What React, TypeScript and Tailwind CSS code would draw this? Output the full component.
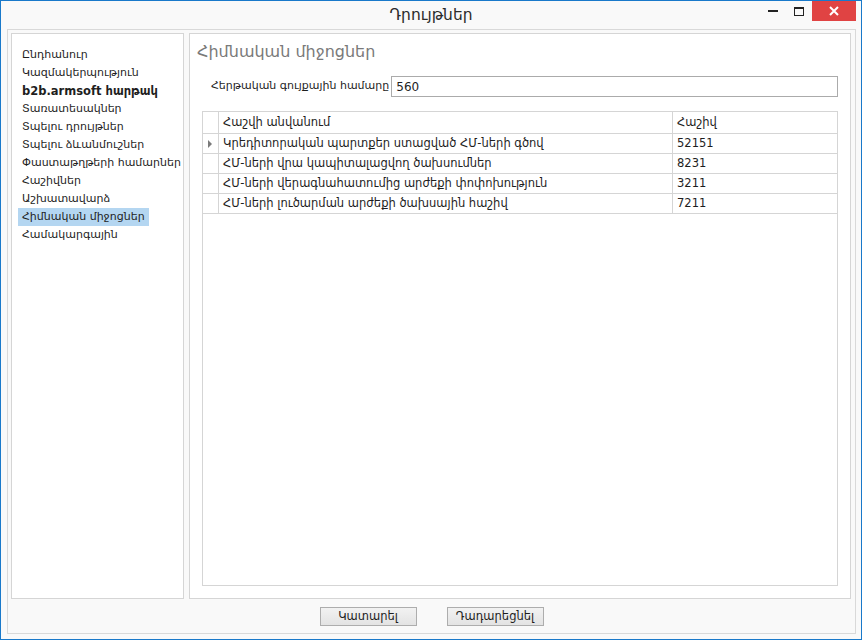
const menuItems = [
  { label: "Ընդհանուր" },
  { label: "Կազմակերպություն" },
  { label: "b2b.armsoft հարթակ", bold: true },
  { label: "Տառատեսակներ" },
  { label: "Տպելու դրույթներ" },
  { label: "Տպելու ձևանմուշներ" },
  { label: "Փաստաթղթերի համարներ" },
  { label: "Հաշիվներ" },
  { label: "Աշխատավարձ" },
  { label: "Հիմնական միջոցներ", active: true },
  { label: "Համակարգային" },
]

const rows = [
  { name: "Կրեդիտորական պարտքեր ստացված ՀՄ-ների գծով", account: "52151", current: true },
  { name: "ՀՄ-ների վրա կապիտալացվող ծախսումներ", account: "8231" },
  { name: "ՀՄ-ների վերագնահատումից արժեքի փոփոխություն", account: "3211" },
  { name: "ՀՄ-ների լուծարման արժեքի ծախսային հաշիվ", account: "7211" },
]

const font = "font-['DejaVu_Sans',sans-serif]"

export default function App() {
  return (
    <div className={`w-[862px] h-[640px] flex flex-col bg-[#f9f9f9] border border-[#1979ca] text-[#1e1e1e] ${font}`}>
      {/* title bar */}
      <div className="h-[28px] flex items-start shrink-0 relative">
        <div className="flex-1 h-full flex items-center justify-center text-[15.5px] text-[#2b2b2b] pt-[1px]">
          Դրույթներ
        </div>
        <div className="absolute right-[5px] top-0 flex items-start">
          <div className="w-[26px] h-[20px] flex items-center justify-center">
            <div className="w-[10px] h-[2px] bg-[#222]" />
          </div>
          <div className="w-[26px] h-[20px] flex items-center justify-center">
            <div className="w-[10px] h-[9px] border border-[#222] border-t-[2px]" />
          </div>
          <div className="w-[44px] h-[20px] bg-[#e04343] flex items-center justify-center text-white">
            <svg width="10" height="10" viewBox="0 0 10 10">
              <path d="M1 1 L9 9 M9 1 L1 9" stroke="white" strokeWidth="2" />
            </svg>
          </div>
        </div>
      </div>

      {/* outer frame */}
      <div className="ml-[6px] mr-[5px] h-[605px] border border-[#d9d9d9] flex flex-col">
        <div className="flex gap-[5px] pl-[3px] pr-[4px] pt-[3px]">
          {/* left menu */}
          <div className="w-[173px] h-[566px] bg-white border border-[#d5d5d5] pt-[12px] pl-[6px] flex flex-col items-start text-[11px] leading-[18px]">
            {menuItems.map((m) => (
              <div
                key={m.label}
                className={`px-[4px] h-[18px] whitespace-nowrap ${m.active ? "bg-[#b4d6f1]" : ""} ${m.bold ? "font-bold text-[11.5px]" : ""}`}
              >
                {m.label}
              </div>
            ))}
          </div>

          {/* right content */}
          <div className="w-[662px] h-[566px] bg-white border border-[#d5d5d5] flex flex-col px-[12px]">
            <div className="text-[16px] text-[#7a7a7a] -ml-[5px] mt-[6px] leading-[24px]">Հիմնական միջոցներ</div>
            <div className="flex items-center mt-[12px] pl-[9px]">
              <span className="text-[11px] mr-[2px] whitespace-nowrap">Հերթական գույքային համարը</span>
              <div className="flex-1 h-[21px] border border-[#ababab] flex items-center px-[4px] text-[12px]">560</div>
            </div>

            {/* grid */}
            <div className="mt-[14px] h-[475px] border border-[#d5d5d5] flex flex-col text-[11.5px]">
              <div className="flex h-[22px] border-b border-[#d5d5d5]">
                <div className="w-[16px] border-r border-[#d5d5d5]" />
                <div className="w-[454px] border-r border-[#d5d5d5] pl-[4px] flex items-center">Հաշվի անվանում</div>
                <div className="flex-1 pl-[4px] flex items-center">Հաշիվ</div>
              </div>
              {rows.map((r) => (
                <div key={r.account} className="flex h-[20px] border-b border-[#d5d5d5]">
                  <div className="w-[16px] border-r border-[#d5d5d5] flex items-center justify-center">
                    {r.current && (
                      <svg width="5" height="8" viewBox="0 0 5 8">
                        <path d="M0 0 L4 4 L0 8 Z" fill="#7a7a7a" />
                      </svg>
                    )}
                  </div>
                  <div className="w-[454px] border-r border-[#d5d5d5] pl-[4px] flex items-center whitespace-nowrap overflow-hidden">
                    {r.name}
                  </div>
                  <div className="flex-1 pl-[4px] flex items-center">{r.account}</div>
                </div>
              ))}
            </div>
          </div>
        </div>

        {/* buttons */}
        <div className="flex justify-center gap-[30px] mt-[8px]">
          <button className="w-[97px] h-[19px] border border-[#adadad] bg-gradient-to-b from-[#f2f2f2] to-[#e3e3e3] text-[11.5px] leading-none">
            Կատարել
          </button>
          <button className="w-[97px] h-[19px] border border-[#adadad] bg-gradient-to-b from-[#f2f2f2] to-[#e3e3e3] text-[11.5px] leading-none">
            Դադարեցնել
          </button>
        </div>
      </div>
    </div>
  )
}
